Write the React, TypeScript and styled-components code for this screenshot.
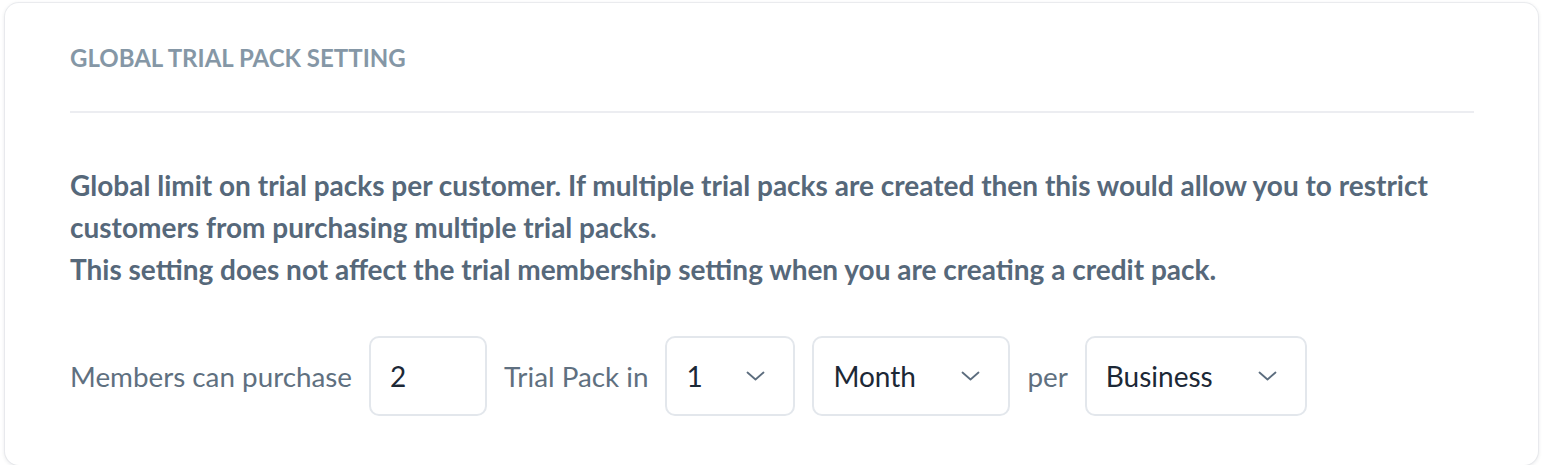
import React from "react";
import styled, { createGlobalStyle } from "styled-components";

const Global = createGlobalStyle`
  html, body { margin: 0; padding: 0; background: #ffffff; }
  body { font-family: Lato, "Open Sans", Arial, sans-serif; -webkit-font-smoothing: antialiased; }
`;

const Page = styled.div`
  padding: 3px 6px 0 5px;
`;

const Card = styled.section`
  background: #fff;
  border-radius: 14px;
  box-shadow: 0 0 0 1px rgba(225, 226, 232, 0.6), 0 1px 4px rgba(30, 40, 60, 0.14);
  padding: 0 64px 0 65px;
  height: 462px;
  box-sizing: border-box;
`;

const Title = styled.h2`
  margin: 0;
  padding-top: 41px;
  padding-bottom: 39px;
  font-size: 24px;
  line-height: 28px;
  font-weight: 700;
  color: #8597a6;
  text-transform: uppercase;
  letter-spacing: 0;
  border-bottom: 2px solid #ecedf1;
`;

const Description = styled.p`
  margin: 51px 0 46px;
  font-size: 28px;
  line-height: 42px;
  font-weight: 700;
  color: #56687a;
`;

const Row = styled.div`
  display: flex;
  align-items: center;
  gap: 17px;
`;

const Label = styled.span`
  font-size: 27.8px;
  color: #5f7080;
  white-space: nowrap;
`;

const Box = styled.div<{ $w: number }>`
  width: ${(p) => p.$w}px;
  height: 80px;
  box-sizing: border-box;
  border: 2px solid #e3e7ec;
  border-radius: 10px;
  display: flex;
  align-items: center;
  justify-content: space-between;
  padding: 0 28px 0 19px;
  font-size: 28px;
  color: #1c2836;
`;

const Chevron = () => (
  <svg width="19" height="10" viewBox="0 0 19 10" fill="none">
    <path d="M1.5 1.5 L9.5 8.5 L17.5 1.5" stroke="#5c6d7e" strokeWidth="1.8" strokeLinecap="round" strokeLinejoin="round" />
  </svg>
);

const Select = ({ w, value }: { w: number; value: string }) => (
  <Box $w={w}>
    <span>{value}</span>
    <Chevron />
  </Box>
);

export default function App() {
  return (
    <>
      <Global />
      <Page>
        <Card>
          <Title>Global Trial Pack Setting</Title>
          <Description>
            Global limit on trial packs per customer. If multiple trial packs are created then this would allow you to restrict
            customers from purchasing multiple trial packs.
            <br />
            This setting does not affect the trial membership setting when you are creating a credit pack.
          </Description>
          <Row>
            <Label>Members can purchase</Label>
            <Box $w={118}>2</Box>
            <Label>Trial Pack in</Label>
            <Select w={130} value="1" />
            <Select w={198} value="Month" />
            <Label>per</Label>
            <Select w={222} value="Business" />
          </Row>
        </Card>
      </Page>
    </>
  );
}
